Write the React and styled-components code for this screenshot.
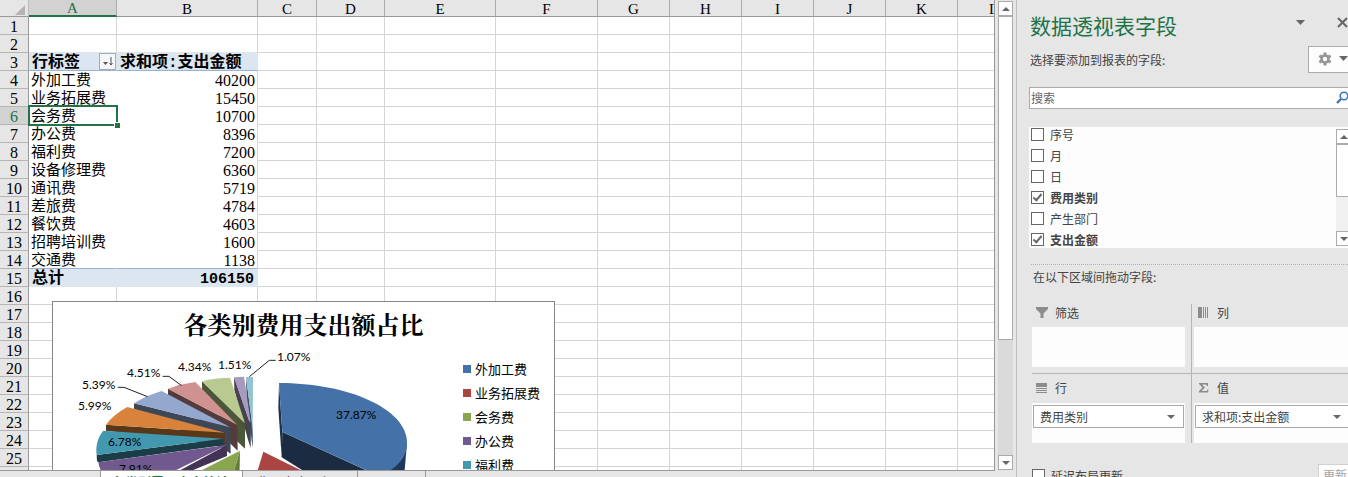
import React, { useState } from 'react';
import styled, { createGlobalStyle } from 'styled-components';

const GlobalStyle = createGlobalStyle`
  *, *::before, *::after { box-sizing:border-box; }

  body {
    margin:0;
    background:#e6e6e6;
    overflow:hidden;
  }

  button, input, select {
    font:inherit;
    color:inherit;
    margin:0;
  }
`

const sheetFont = `'Liberation Serif','Noto Sans CJK SC',serif`
const paneFont = `'Noto Sans CJK SC','Noto Sans',sans-serif`
const green = '#217346'

const Window = styled.div`
  display:flex;
  height:100vh;
  overflow:hidden;
  background:#e6e6e6;
`

/* ---------- sheet ---------- */

const Workbook = styled.main`
  flex:1;
  min-width:0;
  display:flex;
  flex-direction:column;
`
const SheetRow = styled.div`
  flex:1;
  min-height:0;
  display:flex;
`
const Viewport = styled.div`
  flex:1;
  min-width:0;
  position:relative;
  overflow:hidden;
  border-right:1px solid #999;
  background:#fff;
`
const Grid = styled.table`
  table-layout:fixed;
  width:1030px;
  border-collapse:separate;
  border-spacing:0;
  font-family:${sheetFont};
  font-size:15px;
  line-height:17px;
  color:#000;
`
const Corner = styled.td`
  height:17px;
  padding:0;
  background:#e6e6e6;
  border-right:1px solid #bbb;
  border-bottom:1px solid #999;

  svg { display:block; margin:0 3px 0 auto; }
`
const ColHead = styled.th`
  height:17px;
  padding:1px 0 0;
  line-height:14px;
  font-weight:400;
  background:${p => (p.$active ? '#d2d2d2' : '#e6e6e6')};
  color:${p => (p.$active ? green : '#000')};
  border-right:1px solid #ababab;
  border-bottom:${p => (p.$active ? `2px solid ${green}` : '1px solid #999')};
`
const RowHead = styled.th`
  height:18px;
  padding:2px 0 0;
  line-height:15px;
  font-size:16px;
  font-weight:400;
  background:${p => (p.$active ? '#d2d2d2' : '#e6e6e6')};
  color:${p => (p.$active ? green : '#000')};
  border-right:1px solid #999;
  border-bottom:1px solid #b5b5b5;
`
const Cell = styled.td`
  height:18px;
  padding:0;
  border-right:1px solid #d4d4d4;
  border-bottom:1px solid ${p => p.$line || '#d4d4d4'};
`
const Label = styled(Cell)`
  position:relative;
  padding:2px 0 0 2px;
  line-height:15px;
  border-right-color:#fff;
  white-space:nowrap;
`
const Amount = styled(Cell)`
  padding:2px 2px 0 0;
  line-height:15px;
  font-size:16px;
  text-align:right;
`
const Strong = styled(Cell)`
  padding:4px ${p => (p.$number ? '3px' : '0')} 0 3px;
  font-family:'Liberation Mono','Noto Sans CJK SC',monospace;
  font-weight:700;
  font-size:${p => (p.$number ? '15px' : '16px')};
  line-height:13px;
  text-align:${p => (p.$number ? 'right' : 'left')};
  white-space:nowrap;
  background:#dce6f1;
  border-right-color:#dce6f1;
`
const SortCell = styled(Strong)`
  padding-top:0;
`
const SortInner = styled.div`
  display:flex;
  justify-content:space-between;
  height:17px;
  line-height:21px;
`
const SortButton = styled.button`
  width:17px;
  height:17px;
  padding:0;
  border:1px solid #a5acb5;
  background:#f4f6f9;

  svg { display:block; }
`
const Selection = styled.span`
  position:absolute;
  top:-2px;
  left:-1px;
  right:-2px;
  bottom:-2px;
  z-index:1;
  border:2px solid ${green};

  &::after {
    content:'';
    position:absolute;
    right:-4px;
    bottom:-4px;
    width:6px;
    height:6px;
    background:${green};
    border-top:1px solid #fff;
    border-left:1px solid #fff;
  }
`

const columns = [
  ['A', 88], ['B', 141], ['C', 59], ['D', 68], ['E', 111], ['F', 102],
  ['G', 72], ['H', 72], ['I', 72], ['J', 72], ['K', 72], ['L', 72],
]

const expenses = [
  ['外加工费', 40200], ['业务拓展费', 15450], ['会务费', 10700], ['办公费', 8396],
  ['福利费', 7200], ['设备修理费', 6360], ['通讯费', 5719], ['差旅费', 4784],
  ['餐饮费', 4603], ['招聘培训费', 1600], ['交通费', 1138],
]

const PivotCells = ({row})=>{
  if(row === 3){
    return(
      <>
        <SortCell $line='#95b3d7'>
          <SortInner>
            行标签
            <SortButton aria-label='行标签 排序'>
              <svg width='15' height='15' viewBox='0 0 15 15'>
                <path d='M3 8h5l-2.5 3z' fill='#555'/>
                <path d='M11 3v8M9.5 9l1.5 2 1.5-2' stroke='#555' fill='none'/>
              </svg>
            </SortButton>
          </SortInner>
        </SortCell>
        <Strong $line='#95b3d7'>求和项:支出金额</Strong>
      </>
    )
  }
  if(row === 15){
    return(
      <>
        <Strong $line='#dce6f1'>总计</Strong>
        <Strong $line='#dce6f1' $number>106150</Strong>
      </>
    )
  }
  if(row > 3 && row < 15){
    const [name, amount] = expenses[row - 4]
    const line = row === 14 ? '#95b3d7' : '#fff'
    return(
      <>
        <Label $line={line}>{name}{row === 6 && <Selection/>}</Label>
        <Amount $line={line}>{amount}</Amount>
      </>
    )
  }
  const line = row === 2 ? '#dce6f1' : '#d4d4d4'
  return(
    <>
      <Cell $line={line}/>
      <Cell $line={line}/>
    </>
  )
}

const Sheet = ()=>(
  <Grid>
    <colgroup>
      <col width='29'/>
      {columns.map(([name, width])=><col key={name} width={width}/>)}
    </colgroup>
    <thead>
      <tr>
        <Corner>
          <svg width='10' height='13'><path d='M10 3v10H0z' fill='#b4b4b4'/></svg>
        </Corner>
        {columns.map(([name])=><ColHead key={name} $active={name === 'A'}>{name}</ColHead>)}
      </tr>
    </thead>
    <tbody>
      {Array.from({length:26}, (_, i)=>i + 1).map(row=>(
        <tr key={row}>
          <RowHead $active={row === 6}>{row < 26 && row}</RowHead>
          <PivotCells row={row}/>
          {columns.slice(2).map(([name])=><Cell key={name}/>)}
        </tr>
      ))}
    </tbody>
  </Grid>
)

/* ---------- chart, floats over the cells ---------- */

const ChartFrame = styled.figure`
  position:absolute;
  top:301px;
  left:52px;
  width:503px;
  height:300px;
  margin:0;
  background:#fff;
  border:1px solid #868686;
`
const ChartTitle = styled.figcaption`
  padding:8px 0 1px;
  font-family:'Liberation Serif','Noto Serif CJK SC','Noto Sans CJK SC',serif;
  font-size:24px;
  line-height:32px;
  font-weight:700;
  text-align:center;
  color:#000;
`
const ChartBody = styled.div`
  display:flex;
  justify-content:space-between;
  padding-right:14px;
`
const Pie = styled.svg`
  display:block;
  width:390px;
  height:200px;

  text {
    font-family:Lato,sans-serif;
    font-size:12px;
    fill:#000;
  }
`
const Legend = styled.ul`
  flex:0 0 77px;
  margin:0;
  padding:14px 0 0;
  list-style:none;
  font-family:'Noto Sans CJK SC',sans-serif;
  font-size:13px;
  line-height:24px;
  color:#000;
`
const LegendItem = styled.li`
  display:flex;
  align-items:center;
  gap:4px;
  white-space:nowrap;

  &::before {
    content:'';
    width:8px;
    height:8px;
    background:${p => p.$color};
  }
`

const legend = [
  ['外加工费', '#4471a7'], ['业务拓展费', '#aa4542'], ['会务费', '#89a54d'],
  ['办公费', '#71588f'], ['福利费', '#4298af'],
]

// each slice: dark side first, lit top face after it
const slices = [
  ['#33525c', 'M588 237L605 365L609 400L608 450L590 310Z'],
  ['#92c3d5', 'M588 237H609L608 430L604 360Z'],
  ['#474250', 'M552 237L598 370L603 374L602 450L594 425L553 275Z'],
  ['#a799bf', 'M552 238L582 236L602 372L598 370Z'],
  ['#4c5639', 'M456 250L585 376V452L560 428L456 278Z'],
  ['#b8ca90', 'M456 250Q495 239 540 239L585 376Z'],
  ['#543c3c', 'M354 272L562 381L563 458L540 436L354 293Z'],
  ['#d09290', 'M354 272Q394 257 436 252L562 381Z'],
  ['#3d4757', 'M252 316L541 388L542 467L520 452L252 332Z'],
  ['#93a7cf', 'M252 316Q286 294 335 279L541 388Z'],
  ['#593719', 'M168 380L525 404L524 441L168 398Z'],
  ['#d9823b', 'M168 380Q190 350 232 327L525 404Z'],
  ['#1b3d47', 'M140 471L519 422L520 442L145 493L141 488Z'],
  ['#4298af', 'M160 398L519 422L140 471C136 444 143 418 160 398Z'],
  ['#433455', 'M531 441V474L430 516L350 560H310Z'],
  ['#71588f', 'M145 493L531 441L310 550H180Q151 530 145 493Z'],
  ['#657b39', 'M570 458L568 560H540Z'],
  ['#89a54d', 'M570 458L540 560H370Z'],
  ['#aa4542', 'M640 461L840 560H610Z'],
  ['#1b2c42', 'M697 402L1022 550H815L756 516L695 478Z'],
  ['#1d3349', 'M687 256L697 402L695 478L685 330Z'],
  ['#20395a', 'M1071 435L1064 516L1040 560H970Z'],
  ['#4471a7', 'M687 255C890 255 1071 330 1071 435Q1071 484 1022 516L990 535L697 402Z'],
]
const leaders = ['M203 268H222L293 296', 'M338 235H357L395 263', 'M677 187H658L598 236']
const percents = [
  ['37.87%', 336, 419], ['7.91%', 119, 473], ['6.78%', 108, 446], ['5.99%', 78, 410],
  ['5.39%', 82, 389], ['4.51%', 127, 377], ['4.34%', 178, 371], ['1.51%', 218, 369],
  ['1.07%', 277, 361],
]

const Chart = ()=>(
  <ChartFrame>
    <ChartTitle>各类别费用支出额占比</ChartTitle>
    <ChartBody>
      <Pie viewBox='53 343 390 200'>
        <g transform='translate(50 298) scale(0.33333)'>
          {slices.map(([fill, d])=><path key={d} fill={fill} d={d}/>)}
          {leaders.map(d=><path key={d} d={d} fill='none' stroke='#222' strokeWidth='3'/>)}
        </g>
        {percents.map(([text, x, y])=><text key={text} x={x} y={y}>{text}</text>)}
      </Pie>
      <Legend>
        {legend.map(([name, color])=><LegendItem key={name} $color={color}>{name}</LegendItem>)}
      </Legend>
    </ChartBody>
  </ChartFrame>
)

/* ---------- scroll bars and tabs ---------- */

const ScrollTrack = styled.div`
  flex:0 0 15px;
  display:flex;
  flex-direction:column;
  background:${p => (p.$light ? '#f0f0f0' : '#dadada')};
`
const SheetTrack = styled(ScrollTrack)`
  margin:1px 3px 0 3px;
`
const ScrollButton = styled.button`
  flex:0 0 15px;
  display:flex;
  align-items:center;
  justify-content:center;
  padding:0;
  border:1px solid #ababab;
  background:#fff;
`
const Thumb = styled.div`
  flex:0 0 ${p => p.$size};
  background:#fff;
  border:1px solid #ababab;
`
const Spacer = styled.div`
  flex:1;
`
const Tabs = styled.nav`
  flex:0 0 7px;
  display:flex;
  overflow:hidden;
  padding-left:100px;
  margin-right:21px;
  border-top:1px solid #999;
  font-family:${paneFont};
  font-size:13px;
  line-height:16px;
  color:#444;
`
const Tab = styled.button`
  flex:0 0 ${p => p.$width};
  height:24px;
  padding:3px 13px 5px;
  border:0;
  border-right:1px solid #999;
  background:${p => (p.$active ? '#fff' : 'transparent')};
  color:${p => (p.$active ? green : '#444')};
  font-weight:${p => (p.$active ? 700 : 400)};
  text-align:left;
  white-space:nowrap;

  &:first-child { padding-left:11px; border-left:1px solid #999; }
`
const AddTab = styled.button`
  margin-left:34px;
  height:24px;
  padding:4px 0 0;
  border:0;
  background:none;

  svg { display:block; }
`

const Arrow = ({up, wide})=>(
  wide
    ? <svg width='9' height='5'><path d='M0 0h9L4.5 5z' fill='#666'/></svg>
    : <svg width='8' height='4'><path d={up ? 'M0 4h8L4 0z' : 'M0 0h8L4 4z'} fill='#666'/></svg>
)

/* ---------- field pane ---------- */

const Pane = styled.aside`
  flex:0 0 332px;
  display:flex;
  flex-direction:column;
  padding-left:12px;
  border-left:1px solid #bdbdbd;
  overflow:hidden;
  font-family:${paneFont};
  font-size:12px;
  line-height:16px;
  color:#444;

  > * { flex:none; }
`
const PaneHead = styled.header`
  display:flex;
  align-items:center;
  height:46px;
  padding:4px 0 0 1px;
`
const PaneTitle = styled.h2`
  flex:1;
  margin:0;
  font-size:21px;
  line-height:32px;
  font-weight:400;
  color:${green};
`
const IconButton = styled.button`
  display:flex;
  padding:0;
  border:0;
  background:none;
`
const HeadButtons = styled.div`
  display:flex;
  align-items:center;
  gap:32px;
  padding-bottom:6px;
`
const PaneIntro = styled.div`
  display:flex;
  justify-content:space-between;
  align-items:center;
  padding-left:1px;
`
const ToolsButton = styled.button`
  display:flex;
  align-items:center;
  gap:7px;
  width:40px;
  height:27px;
  padding:0 0 2px 9px;
  border:1px solid #ababab;
  border-right:0;
  background:#fdfdfd;

  svg { flex:none; }
`
const SearchBox = styled.label`
  display:flex;
  align-items:center;
  height:22px;
  margin-top:14px;
  padding-bottom:2px;
  border:1px solid #ababab;
  border-right:0;
  background:#fff;
`
const SearchInput = styled.input`
  flex:1;
  min-width:0;
  height:18px;
  padding:0 1px;
  border:0;
  outline:0;
  background:none;

  &::placeholder { color:#666; opacity:1; }
`
const FieldArea = styled.div`
  display:flex;
  height:121px;
  margin-top:18px;
  overflow:hidden;
  background:#fdfdfd;
`
const FieldList = styled.ul`
  flex:1;
  margin:0;
  padding:0 0 0 2px;
  list-style:none;
`
const FieldTrack = styled(ScrollTrack)`
  margin:2px -3px 2px 0;
`
const FieldLabel = styled.label`
  display:flex;
  align-items:center;
  gap:6px;
  height:21px;
  padding-bottom:6px;
  font-weight:${p => (p.$checked ? 700 : 400)};
`
const CheckBox = styled.input`
  appearance:none;
  flex:none;
  width:13px;
  height:13px;
  border:1px solid #666;
  background:#fff;

  &:checked::after {
    content:'';
    display:block;
    width:5px;
    height:9px;
    margin-left:3px;
    border:solid #666;
    border-width:0 2px 2px 0;
    transform:rotate(40deg);
  }
`
const FieldText = styled.span`
  padding-top:1px;
`
const Divider = styled.hr`
  margin:16px 0 0 2px;
  border:0;
  border-top:1px dotted #b0b0b0;
`
const AreaHint = styled.p`
  margin:4px 0 0;
  padding-left:4px;
`
const Areas = styled.div`
  display:grid;
  grid-template-columns:160px 1fr;
  margin:19px -3px 0 3px;
`
const Area = styled.section`
  padding:0 ${p => (p.$right ? '0' : '6px')} ${p => (p.$bottom ? '0' : '6px')} ${p => (p.$right ? '2px' : '0')};
  border-right:${p => (p.$right ? '0' : '1px solid #b5b5b5')};
  border-bottom:${p => (p.$bottom ? '0' : '1px solid #b5b5b5')};
`
const AreaName = styled.h3`
  display:flex;
  align-items:center;
  gap:7px;
  height:${p => (p.$bottom ? '29px' : '23px')};
  margin:0;
  padding:0 0 ${p => (p.$bottom ? '1px' : '5px')} 4px;
  font-size:12px;
  font-weight:400;

  svg { flex:none; margin-bottom:2px; }
`
const DropBox = styled.div`
  height:40px;
  padding:2px 1px;
  background:#fdfdfd;
`
const Picker = styled.div`
  display:grid;
  align-items:center;
  height:23px;
  border:1px solid #ababab;
  background:#fff;

  > * { grid-area:1 / 1; }
  svg { justify-self:end; margin-right:8px; pointer-events:none; }
`
const PickerSelect = styled.select`
  appearance:none;
  width:100%;
  height:21px;
  padding:0 20px 0 6px;
  border:0;
  background:none;
`
const PaneFoot = styled.footer`
  display:flex;
  justify-content:space-between;
  margin-top:21px;
  padding-left:3px;
`
const DeferLabel = styled.label`
  display:flex;
  align-items:center;
  gap:6px;
  height:21px;
  padding-top:2px;
`
const UpdateButton = styled.button`
  width:30px;
  height:24px;
  padding:0 0 2px 4px;
  border:1px solid #d0d0d0;
  border-right:0;
  background:#fdfdfd;
  text-align:left;
  white-space:nowrap;

  &:disabled { color:#a6a6a6; }
`

const icons = {
  filter: <path d='M0 0h12v2L7.5 6.5V11h-3V6.5L0 2z'/>,
  columns: <path d='M0 0h4v11H0zM5 0h1v11H5zM7 0h1v11H7zM9 0h1v11H9z'/>,
  rows: <path d='M0 1h11v4H0zM0 6h11v1H0zM0 8h11v1H0zM0 10h11v1H0z'/>,
  sum: <path d='M1 1h9v3H9L8 2.5H4L7 5.5 3.5 9H8.500L9.5 7.500h1L10 10.500H1V9L4.500 5.500 1 2z'/>,
}

const fields = ['序号', '月', '日', '费用类别', '产生部门', '支出金额']

const DropArea = ({name, icon, value, right, bottom})=>(
  <Area $right={right} $bottom={bottom}>
    <AreaName $bottom={bottom}>
      <svg width='12' height='11' fill='#8c8c8c'>{icons[icon]}</svg>
      {name}
    </AreaName>
    <DropBox>
      {value && (
        <Picker>
          <PickerSelect aria-label={name} defaultValue={value}>
            <option>{value}</option>
          </PickerSelect>
          <Arrow/>
        </Picker>
      )}
    </DropBox>
  </Area>
)

const FieldPane = ()=>{
  const [checked, setChecked] = useState(['费用类别', '支出金额'])

  const toggle = (name)=>{
    setChecked(checked.includes(name) ? checked.filter(n=>n !== name) : [...checked, name])
  }

  return(
    <Pane>
      <PaneHead>
        <PaneTitle>数据透视表字段</PaneTitle>
        <HeadButtons>
          <IconButton aria-label='任务窗格选项'><Arrow wide/></IconButton>
          <IconButton aria-label='关闭'>
            <svg width='11' height='11'><path d='M1 1l9 9M10 1l-9 9' stroke='#666' strokeWidth='2'/></svg>
          </IconButton>
        </HeadButtons>
      </PaneHead>
      <PaneIntro>
        选择要添加到报表的字段:
        <ToolsButton aria-label='工具'>
          <svg width='14' height='14' viewBox='-7 -7 14 14'>
            <circle r='3.5' fill='none' stroke='#969696' strokeWidth='2.6'/>
            {[0, 60, 120].map(a=>(
              <path key={a} d='M0-6.5V-4M0 4V6.5' stroke='#969696' strokeWidth='3' transform={`rotate(${a})`}/>
            ))}
          </svg>
          <Arrow wide/>
        </ToolsButton>
      </PaneIntro>
      <SearchBox>
        <SearchInput aria-label='搜索' placeholder='搜索'/>
        <svg width='12' height='13' viewBox='0 0 12 13'>
          <circle cx='8' cy='5' r='3.8' fill='none' stroke='#3f76b5' strokeWidth='1.6'/>
          <path d='M5 8L1 12' stroke='#3f76b5' strokeWidth='2.4'/>
        </svg>
      </SearchBox>
      <FieldArea>
        <FieldList>
          {fields.map(name=>(
            <li key={name}>
              <FieldLabel $checked={checked.includes(name)}>
                <CheckBox type='checkbox' checked={checked.includes(name)} onChange={()=>toggle(name)}/>
                <FieldText>{name}</FieldText>
              </FieldLabel>
            </li>
          ))}
        </FieldList>
        <FieldTrack $light>
          <ScrollButton aria-label='向上'><Arrow up/></ScrollButton>
          <Thumb $size='53px'/>
          <Spacer/>
          <ScrollButton aria-label='向下'><Arrow/></ScrollButton>
        </FieldTrack>
      </FieldArea>
      <Divider/>
      <AreaHint>在以下区域间拖动字段:</AreaHint>
      <Areas>
        <DropArea name='筛选' icon='filter'/>
        <DropArea name='列' icon='columns' right/>
        <DropArea name='行' icon='rows' value='费用类别' bottom/>
        <DropArea name='值' icon='sum' value='求和项:支出金额' right bottom/>
      </Areas>
      <PaneFoot>
        <DeferLabel>
          <CheckBox type='checkbox'/>
          <FieldText>延迟布局更新</FieldText>
        </DeferLabel>
        <UpdateButton disabled>更新</UpdateButton>
      </PaneFoot>
    </Pane>
  )
}

const App = ()=>(
  <Window>
    <GlobalStyle/>
    <Workbook>
      <SheetRow>
        <Viewport>
          <Sheet/>
          <Chart/>
        </Viewport>
        <SheetTrack>
          <ScrollButton aria-label='向上滚动'><Arrow up/></ScrollButton>
          <Thumb $size='69%'/>
          <Spacer/>
          <ScrollButton aria-label='向下滚动'><Arrow/></ScrollButton>
        </SheetTrack>
      </SheetRow>
      <Tabs>
        <Tab $active $width='142px'>各类别费用支出统计</Tab>
        <Tab $width='115px'>费用支出明细</Tab>
        <Tab $width='68px' aria-label='空白工作表'/>
        <AddTab aria-label='新工作表'>
          <svg width='14' height='14'>
            <circle cx='7' cy='7' r='6' fill='none' stroke='#777'/>
            <path d='M7 4v6M4 7h6' stroke='#777'/>
          </svg>
        </AddTab>
      </Tabs>
    </Workbook>
    <FieldPane/>
  </Window>
)

export default App
